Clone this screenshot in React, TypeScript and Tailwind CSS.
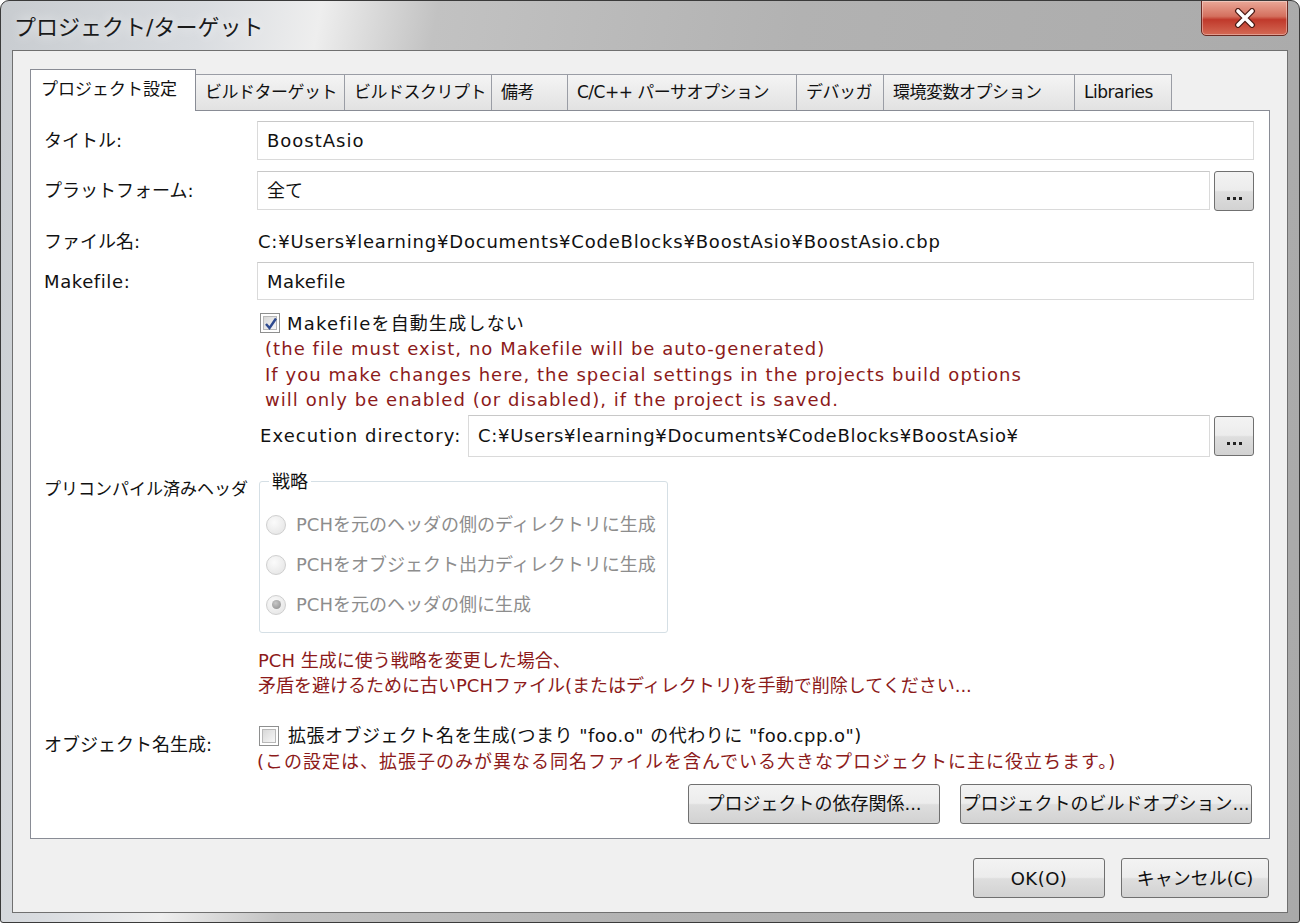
import React from 'react'

// タブの幅は元画面に合わせて固定
const tabs = [
  { label: 'プロジェクト設定', w: 'w-[166px]' },
  { label: 'ビルドターゲット', w: 'w-[150px]' },
  { label: 'ビルドスクリプト', w: 'w-[148px]' },
  { label: '備考', w: 'w-[77px]' },
  { label: 'C/C++ パーサオプション', w: 'w-[230px]' },
  { label: 'デバッガ', w: 'w-[88px]' },
  { label: '環境変数オプション', w: 'w-[192px]' },
  { label: 'Libraries', w: 'w-[98px]' },
]

const btnBg =
  'bg-[linear-gradient(#f3f3f3,#ececec_48%,#dedede_52%,#d2d2d2)] border border-[#707070] rounded-[3px]'

function TextBox({ value, className = '' }: { value: string; className?: string }) {
  return (
    <div
      className={`flex items-center bg-white border border-[#dadada] border-t-[#c8c8c8] px-[9px] whitespace-nowrap overflow-hidden ${className}`}
    >
      {value}
    </div>
  )
}

function DotsButton() {
  return (
    <button
      type="button"
      className={`w-[40px] h-[40px] shrink-0 flex items-end justify-center pb-[10px] gap-[3px] ${btnBg}`}
    >
      <span className="w-[3px] h-[3px] bg-[#222]" />
      <span className="w-[3px] h-[3px] bg-[#222]" />
      <span className="w-[3px] h-[3px] bg-[#222]" />
    </button>
  )
}

function CheckBox({ checked }: { checked?: boolean }) {
  return (
    <span className="w-[20px] h-[20px] shrink-0 border border-[#8e8f8f] bg-white p-[2px]">
      <span className="relative block w-full h-full border border-[#b8b8b8] bg-[linear-gradient(135deg,#d8d8d8,#f7f7f7)]">
        {checked && (
          <svg className="absolute -left-[2px] -top-[2px] w-[18px] h-[18px]" viewBox="0 0 18 18">
            <path d="M4 9 L7.5 13 L14 3.5" fill="none" stroke="#2e4a8f" strokeWidth={2.4} />
          </svg>
        )}
      </span>
    </span>
  )
}

function Radio({ checked }: { checked?: boolean }) {
  return (
    <span className="w-[20px] h-[20px] shrink-0 rounded-full border border-[#cfcfcf] bg-[radial-gradient(circle_at_40%_35%,#fbfbfb,#e2e2e2)] flex items-center justify-center">
      {checked && <span className="w-[9px] h-[9px] rounded-full bg-[radial-gradient(circle_at_40%_35%,#c8c8c8,#8a8a8a)]" />}
    </span>
  )
}

export default function App() {
  return (
    <div className="w-[1300px] h-[923px] rounded-t-[9px] rounded-b-[3px] border border-[#3a3a3a] bg-[linear-gradient(100deg,#c8ccd0_0%,#d9dce0_14%,#eeeeee_22%,#c2c2c2_30%,#b2b2b2_55%,#a9a9a9_100%)] flex flex-col font-['DejaVu_Sans','Noto_Sans_CJK_JP',sans-serif] text-[18px] text-[#111] overflow-hidden">
      {/* タイトルバー */}
      <div className="h-[49px] flex justify-between pl-[13px] pr-[11px]">
        <div className="self-center text-[22px] text-[#1a1a1a] pt-[4px] [text-shadow:0_0_12px_rgba(255,255,255,1)]">
          プロジェクト/ターゲット
        </div>
        <div className="w-[87px] h-[36px] -mt-px rounded-b-[5px] border border-[#6b2a22] bg-[linear-gradient(#eaa898,#d4705e_45%,#c0392b_55%,#d46a55)] flex items-center justify-center shadow-[inset_0_0_0_1px_rgba(255,255,255,0.35)]">
          <svg width="26" height="20" viewBox="0 0 26 20">
            <path d="M6 3 L20 17 M20 3 L6 17" stroke="#4a1a14" strokeWidth={6} strokeLinecap="round" />
            <path d="M6 3 L20 17 M20 3 L6 17" stroke="#ffffff" strokeWidth={3.6} strokeLinecap="round" />
          </svg>
        </div>
      </div>

      {/* クライアント領域 */}
      <div className="mx-[11px] h-[863px] border border-[#707070] bg-[#f0f0f0] pl-[17px] pr-[17px] pt-[18px] flex flex-col">
        {/* タブ */}
        <div className="h-[41px] flex items-end text-[17px]">
          {tabs.map((t, i) =>
            i === 0 ? (
              <div
                key={t.label}
                className={`${t.w} h-[42px] -mb-px relative z-10 bg-white border border-b-0 border-[#898c95] flex items-center pl-[10px] pb-[2px] whitespace-nowrap`}
              >
                {t.label}
              </div>
            ) : (
              <div
                key={t.label}
                className={`${t.w} h-[36px] -ml-px bg-[linear-gradient(#f4f4f4,#ebebeb_50%,#e2e2e2)] border border-b-0 border-[#9a9da5] flex items-center pl-[9px] whitespace-nowrap overflow-hidden tracking-[-0.5px]`}
              >
                {t.label}
              </div>
            )
          )}
        </div>

        {/* タブパネル */}
        <div className="h-[729px] border border-[#898c95] bg-white pl-[13px] pr-[15px] pt-[10px] flex flex-col">
          <div className="flex h-[39px]">
            <div className="w-[213px] shrink-0 flex items-center">タイトル:</div>
            <TextBox value="BoostAsio" className="flex-1 tracking-[1px]" />
          </div>

          <div className="flex h-[39px] mt-[11px]">
            <div className="w-[213px] shrink-0 flex items-center">プラットフォーム:</div>
            <TextBox value="全て" className="flex-1 mr-[4px]" />
            <DotsButton />
          </div>

          <div className="flex h-[52px] pt-[10px] items-center">
            <div className="w-[213px] shrink-0">ファイル名:</div>
            <div className="pl-[1px] whitespace-nowrap tracking-[0.8px]">
              C:¥Users¥learning¥Documents¥CodeBlocks¥BoostAsio¥BoostAsio.cbp
            </div>
          </div>

          <div className="flex h-[38px]">
            <div className="w-[213px] shrink-0 flex items-center tracking-[0.6px]">Makefile:</div>
            <TextBox value="Makefile" className="flex-1 tracking-[0.5px]" />
          </div>

          <div className="flex">
            <div className="w-[213px] shrink-0" />
            <div className="flex-1 flex flex-col">
              <div className="h-[22px] mt-[12px] flex items-center pl-[3px] gap-[7px]">
                <CheckBox checked />
                <span className="whitespace-nowrap tracking-[1.2px]">Makefileを自動生成しない</span>
              </div>
              <div className="mt-[2px] pl-[8px] leading-[25.5px] text-[#8c1a1a] whitespace-nowrap tracking-[1.05px]">
                <div>(the file must exist, no Makefile will be auto-generated)</div>
                <div>If you make changes here, the special settings in the projects build options</div>
                <div>will only be enabled (or disabled), if the project is saved.</div>
              </div>
              <div className="mt-[2px] h-[42px] flex items-center pl-[3px]">
                <span className="w-[208px] shrink-0 whitespace-nowrap tracking-[1.1px]">Execution directory:</span>
                <TextBox
                  value="C:¥Users¥learning¥Documents¥CodeBlocks¥BoostAsio¥"
                  className="flex-1 h-[42px] mr-[4px] tracking-[0.7px]"
                />
                <DotsButton />
              </div>
            </div>
          </div>

          {/* プリコンパイル済みヘッダ */}
          <div className="flex mt-[13px]">
            <div className="w-[213px] shrink-0 pt-[7px] leading-[24px] whitespace-nowrap text-[17px]">プリコンパイル済みヘッダ</div>
            <div className="flex-1 flex flex-col">
              <fieldset className="ml-[2px] w-[409px] border border-[#d5dfe5] rounded-[3px] pl-[6px] pt-[11px] pb-[7px]">
                <legend className="ml-[3px] px-[3px] leading-[24px]">戦略</legend>
                {[
                  { t: 'PCHを元のヘッダの側のディレクトリに生成', c: false },
                  { t: 'PCHをオブジェクト出力ディレクトリに生成', c: false },
                  { t: 'PCHを元のヘッダの側に生成', c: true },
                ].map((r) => (
                  <div key={r.t} className="h-[40px] flex items-center gap-[10px] text-[#8d8d8d] whitespace-nowrap">
                    <Radio checked={r.c} />
                    <span>{r.t}</span>
                  </div>
                ))}
              </fieldset>
              <div className="mt-[15px] pl-[1px] leading-[25px] text-[#8c1a1a] whitespace-nowrap">
                <div>PCH 生成に使う戦略を変更した場合、</div>
                <div>矛盾を避けるために古いPCHファイル(またはディレクトリ)を手動で削除してください...</div>
              </div>
            </div>
          </div>

          {/* オブジェクト名生成 */}
          <div className="flex mt-[25px]">
            <div className="w-[213px] shrink-0 pt-[10px] leading-[24px]">オブジェクト名生成:</div>
            <div className="flex-1 flex flex-col">
              <div className="h-[26px] flex items-center pl-[2px] gap-[9px] whitespace-nowrap">
                <CheckBox />
                <span className="tracking-[0.5px]">拡張オブジェクト名を生成(つまり "foo.o" の代わりに "foo.cpp.o")</span>
              </div>
              <div className="leading-[26px] text-[#8c1a1a] whitespace-nowrap tracking-[1px]">
                (この設定は、拡張子のみが異なる同名ファイルを含んでいる大きなプロジェクトに主に役立ちます。)
              </div>
              <div className="mt-[9px] mr-[2px] flex justify-end gap-[20px]">
                <button type="button" className={`w-[252px] h-[40px] ${btnBg}`}>
                  プロジェクトの依存関係...
                </button>
                <button type="button" className={`w-[292px] h-[40px] ${btnBg}`}>
                  プロジェクトのビルドオプション...
                </button>
              </div>
            </div>
          </div>
        </div>

        {/* 下部ボタン */}
        <div className="mt-[19px] flex justify-end gap-[16px] pr-px">
          <button type="button" className={`w-[132px] h-[40px] ${btnBg} tracking-[0.5px]`}>
            OK(O)
          </button>
          <button type="button" className={`w-[148px] h-[40px] ${btnBg}`}>
            キャンセル(C)
          </button>
        </div>
      </div>
    </div>
  )
}
